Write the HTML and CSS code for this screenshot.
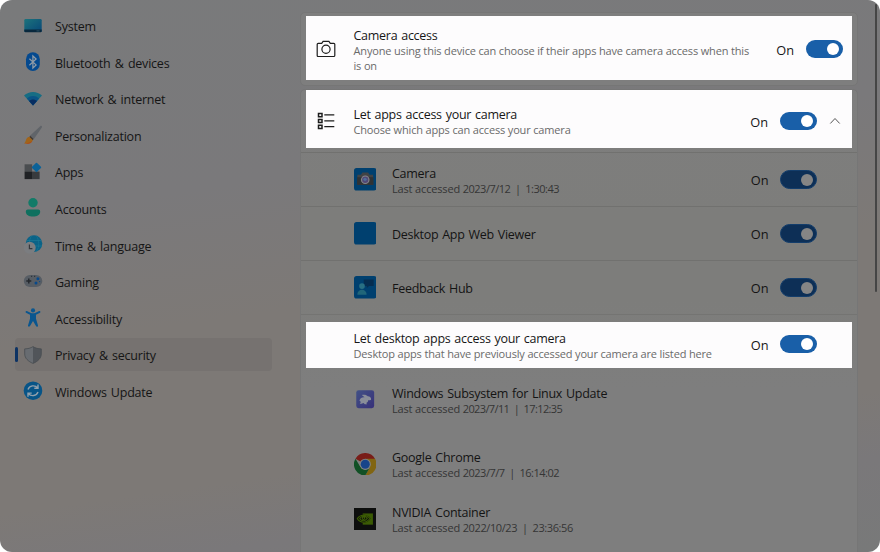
FILE: index.html
```html
<!DOCTYPE html>
<html lang="en">
<head>
<meta charset="utf-8">
<title>Privacy &amp; security</title>
<link rel="stylesheet" href="styles.css">
</head>
<body>
<div class="window">
  <nav class="sidebar">
    <a class="nav-item"><svg class="nav-icon" viewBox="0 0 20 20"><defs><linearGradient id="scr" x2="1" y2="1"><stop stop-color="#1c737c"/><stop offset="1" stop-color="#074778"/></linearGradient></defs><rect x="1.3" y="3.1" width="17.4" height="13" rx="1.2" fill="url(#scr)"/><path d="M1.3 13.500h17.4v1.600a1.200 1.200 0 0 1-1.200 1.200h-15a1.200 1.200 0 0 1-1.200-1.200z" fill="#08283d"/><path d="M13.500 14.900h3" stroke="#3a6072" stroke-width=".7"/></svg><span>System</span></a>
    <a class="nav-item"><svg class="nav-icon" viewBox="0 0 20 20"><rect x="3" y="0.3" width="13.800" height="18.800" rx="6.900" fill="#04498f"/><path d="M6.400 6.700l6.700 6.200L9.900 16V4l3.200 3-6.700 6.200" fill="none" stroke="#8e9aa6" stroke-width="1.250"/></svg><span>Bluetooth &amp; devices</span></a>
    <a class="nav-item"><svg class="nav-icon" viewBox="0 0 20 20"><g transform="translate(0 -1)"><path d="M1 7.500C6 2.700 14 2.700 19 7.500l-9 9.900z" fill="#176d84"/><path d="M3.900 10.500c3.500-3.300 8.700-3.300 12.200 0L10 17.400z" fill="#0b5486"/><path d="M6 13c2.400-2 5.600-2 8 0l-4 4.400z" fill="#072d61"/></g></svg><span>Network &amp; internet</span></a>
    <a class="nav-item"><svg class="nav-icon" viewBox="0 0 20 20"><path d="M7 10.800L17.200 1.200c1.200-.9 2.300.2 1.500 1.500L10.900 14z" fill="#606469"/><path d="M7.200 10.700l3.500 3.300-1.300 1.200-3.200-3z" fill="#403a34"/><path d="M6.200 11.800l3.600 3.400C9 18.600 4.500 19.400 1 18.300 3.600 17 2.200 12.700 6.200 11.800z" fill="#a0641a"/><path d="M1 18.300C4 18.300 7.500 17.200 9.300 15.900 7.700 19.200 4 19.200 1 18.300z" fill="#b0491a"/></svg><span>Personalization</span></a>
    <a class="nav-item"><svg class="nav-icon" viewBox="0 0 20 20"><rect x="1.600" y="2.300" width="7.500" height="7.400" fill="#4a4d50"/><rect x="1.600" y="9.600" width="7.500" height="7.500" fill="#202225"/><rect x="9" y="9.600" width="7.600" height="7.500" fill="#383b3e"/><rect x="10" y="1.800" width="7.100" height="7.100" rx=".8" fill="#0b6298" transform="rotate(45 13.500 5.300)"/></svg><span>Apps</span></a>
    <a class="nav-item"><svg class="nav-icon" viewBox="0 0 20 20"><circle cx="10" cy="4.700" r="4.700" fill="#127b68"/><path d="M4.800 11.400h10.400a2 2 0 0 1 2 2c0 3.400-3.200 5.200-7.200 5.200s-7.200-1.800-7.200-5.200a2 2 0 0 1 2-2z" fill="#0f705f"/></svg><span>Accounts</span></a>
    <a class="nav-item"><svg class="nav-icon" viewBox="0 0 20 20"><circle cx="11" cy="8.600" r="8.300" fill="#0b6387"/><path d="M4 5.500h14M3 11h16M8.500.9c-3 5-3 11 0 15.500M13.500.9c3 5 3 11 0 15.500" fill="none" stroke="#1b7895" stroke-width=".7"/><circle cx="6.700" cy="12.700" r="6" fill="#7b7d80"/><path d="M6.400 9.600v4h3" fill="none" stroke="#34383d" stroke-width="1.200"/></svg><span>Time &amp; language</span></a>
    <a class="nav-item"><svg class="nav-icon" viewBox="0 0 20 20"><rect x=".8" y="2.900" width="18.500" height="12.200" rx="6.100" fill="#575d64"/><path d="M3.300 9h5M5.800 6.500v5" stroke="#25292e" stroke-width="1.500"/><circle cx="14.900" cy="6.800" r="1.500" fill="#08498b"/><circle cx="13" cy="11" r="1.500" fill="#08498b"/><circle cx="16.600" cy="9.600" r=".7" fill="#08498b"/><path d="M8 4.300h1.200M11 4.300h1.200" stroke="#262c32"/></svg><span>Gaming</span></a>
    <a class="nav-item"><svg class="nav-icon" viewBox="0 0 20 20"><circle cx="10" cy="2.400" r="2.100" fill="#0a568f"/><path d="M3.800 3.100L8 4.900q2 .7 4 0l4.200-1.800c1.200-.3 1.700 1.200.8 1.700l-4 2v4l2 6.600c.2 1.300-1.500 1.700-2 .6L10 13.100l-3 4.900c-.6 1.100-2.300.6-2-.6l2-6.600v-4l-4-2c-.9-.6-.4-1.900.8-1.700z" fill="#0a568f"/></svg><span>Accessibility</span></a>
    <a class="nav-item selected"><svg class="nav-icon" viewBox="0 0 20 20"><path d="M10 1.600c2.500 1.600 5 2.200 8.300 2.300v5c0 4.300-3.500 7.500-8.300 9.500z" fill="#51555a"/><path d="M10 1.600C7.500 3.200 5 3.800 1.700 3.900v5c0 4.300 3.500 7.500 8.300 9.500z" fill="#686c71"/><path d="M10 1.600c2.500 1.600 5 2.200 8.300 2.300v5c0 4.300-3.500 7.500-8.300 9.500-4.800-2-8.300-5.200-8.300-9.500v-5C5 3.800 7.500 3.200 10 1.600z" fill="none" stroke="#484c51" stroke-width=".8"/></svg><span>Privacy &amp; security</span></a>
    <a class="nav-item"><svg class="nav-icon" viewBox="0 0 20 20"><circle cx="10" cy="9.700" r="9.300" fill="#075487"/><path d="M5 8.400c1.400-4 6.900-4.800 9.700-1.500M15 3.600v3.700h-3.700M15 11.100c-1.400 4-6.900 4.700-9.700 1.400M5 15.800v-3.700h3.700" fill="none" stroke="#91a0ac" stroke-width="1.400"/></svg><span>Windows Update</span></a>
  </nav>
  <main class="content">
    <section class="card access">
      <div class="spot spot-access">
        <svg class="lead" viewBox="0 0 20 20"><path d="M2.200 4.300h3.500l1.400-2h5.800l1.400 2h3.500c.6 0 1 .4 1 1v11.200c0 .6-.4 1-1 1H2.200c-.6 0-1-.4-1-1V5.300c0-.6.400-1 1-1z"/><circle cx="10" cy="10.300" r="4.100"/></svg>
        <div class="copy"><h2>Camera access</h2><p>Anyone using this device can choose if their apps have camera access when this<br>is on</p></div>
        <span class="state">On</span><i class="toggle"></i>
      </div>
    </section>
    <section class="card apps">
      <div class="spot spot-apps">
        <svg class="lead" viewBox="0 0 20 20"><path d="M2.500 2.600h3.500v3.200H2.500zM2.500 8.400h3.500v3.200H2.500zM2.500 14.200h3.500v3.200H2.500z" stroke-width="1.500"/><path d="M8.300 3.800h10M8.300 9.900h10M8.300 15.600h10"/></svg>
        <div class="copy"><h2>Let apps access your camera</h2><p>Choose which apps can access your camera</p></div>
        <span class="state">On</span><i class="toggle"></i>
        <svg class="chevron" viewBox="0 0 12 12"><path d="M1.300 8.500L6 3.500l4.700 5"/></svg>
      </div>
      <div class="row camera">
        <svg class="app-icon" viewBox="0 0 22 22"><rect width="22" height="22" rx="2.500" fill="#00406f"/><path d="M3.300 6.500h3.500l1.400-2h5.600l1.400 2h3.500v10H3.300z" fill="#414345"/><path d="M3 9h16v7.500H3z" fill="#303335"/><circle cx="11" cy="11.500" r="4.200" fill="#85878a"/><circle cx="11" cy="11.500" r="3.100" fill="#514877"/><circle cx="10.800" cy="11.100" r="1.600" fill="#4f6f97"/></svg>
        <div class="copy"><h2>Camera</h2><p>Last accessed <span class="when">2023/7/12 &nbsp;|&nbsp; 1:30:43</span></p></div>
        <span class="state">On</span><i class="toggle"></i>
      </div>
      <div class="row">
        <svg class="app-icon" viewBox="0 0 22 22"><rect width="22" height="22" rx="2.500" fill="#00406f"/></svg>
        <div class="copy"><h2>Desktop App Web Viewer</h2></div>
        <span class="state">On</span><i class="toggle"></i>
      </div>
      <div class="row">
        <svg class="app-icon" viewBox="0 0 22 22"><rect width="22" height="22" rx="2.500" fill="#00406f"/><path d="M9.500 3.300h9.700v6.500h-4.500l-2.200 2v-2h-3z" fill="#062d50"/><circle cx="7.800" cy="9.800" r="2.800" fill="#286f83"/><path d="M3.300 18.400c0-6.500 9-6.500 9 0z" fill="#216679"/></svg>
        <div class="copy"><h2>Feedback Hub</h2></div>
        <span class="state">On</span><i class="toggle"></i>
      </div>
      <div class="group">
        <div class="spot spot-desktop">
          <div class="copy"><h2>Let desktop apps access your camera</h2><p>Desktop apps that have previously accessed your camera are listed here</p></div>
          <span class="state">On</span><i class="toggle"></i>
        </div>
        <div class="desktop-app wsl">
          <svg class="app-icon" viewBox="0 0 22 22"><defs><linearGradient id="wsl" x2="1" y2="1"><stop stop-color="#425186"/><stop offset="1" stop-color="#373079"/></linearGradient></defs><rect x="2.200" y="1.200" width="17.500" height="17.500" rx="2.300" fill="url(#wsl)"/><path d="M5.300 11.300c.5-2.500 2.800-3.600 5-3.300L7.600 5.900c2.200-.7 4.800-.4 5.900 1.300 2.200 0 3.400 1.600 3.200 3.200-1 .8-2 .6-2.900.6.200 1.500-.9 2.300-1.800 2.700l.8 1.100h-2.200l-1.400-1.200-1.700.9H5.600l1.100-1.900z" fill="#898d99"/></svg>
          <div class="copy"><h2>Windows Subsystem for Linux Update</h2><p>Last accessed <span class="when">2023/7/11 &nbsp;|&nbsp; 17:12:35</span></p></div>
        </div>
        <div class="desktop-app chrome">
          <svg class="app-icon" viewBox="0 0 22 22"><path d="M11 11L1.470 5.500A11 11 0 0 1 20.530 5.500z" fill="#791d18"/><path d="M11 5.500h9.530A11 11 0 0 1 11 22l4.760-8.250z" fill="#816512"/><path d="M1.470 5.500l4.770 8.250L11 16.500l4.760-2.750L11 22A11 11 0 0 1 1.470 5.500z" fill="#115025"/><circle cx="11" cy="11" r="5.500" fill="#808080"/><circle cx="11" cy="11" r="4.400" fill="#18448a"/></svg>
          <div class="copy"><h2>Google Chrome</h2><p>Last accessed <span class="when">2023/7/7 &nbsp;|&nbsp; 16:14:02</span></p></div>
        </div>
        <div class="desktop-app nvidia">
          <svg class="app-icon" viewBox="0 0 22 22"><rect width="22" height="22" fill="#0d0e0d"/><path d="M8.500 5.300h10v11h-10z" fill="#3b5b04"/><path d="M2.700 10.500C5 6 12 4.700 16.200 10.300 12.500 16 5.500 16 2.700 10.500z" fill="#0d0e0d"/><path d="M3.200 10.400C6 6.300 11.700 5.700 15.500 10.200 12 15 6.300 15 3.200 10.400zM5.500 10.400c2-3 5.400-3 7.600-.3-2.100 3-5.400 3.200-7.600.3zM8.700 8.700c2-.2 2.400 1.900.7 2.600-1.400-.2-1.700-1.400-.7-2.600z" fill="none" stroke="#3b5b04" stroke-width="1"/></svg>
          <div class="copy"><h2>NVIDIA Container</h2><p>Last accessed <span class="when">2022/10/23 &nbsp;|&nbsp; 23:36:56</span></p></div>
        </div>
      </div>
    </section>
  </main>
  <div class="scrollbar"></div>
</div>
</body>
</html>
```
FILE: styles.css
```css
* { box-sizing: border-box; }
body { margin: 0; background: #fff; font-family: "Open Sans", "Noto Sans", sans-serif; }
h2, p { margin: 0; font-weight: 400; white-space: nowrap; }
.window {
  display: flex; width: 880px; height: 552px; overflow: hidden; border-radius: 12px;
  background: linear-gradient(172deg, #797a7b 0%, #7a797b 32%, #7d7976 52%, #7d7976 76%, #7a787a 86%, #787979 100%);
}
.sidebar { display: flex; flex-direction: column; gap: 3.6px; width: 300px; flex: none; padding: 9px 28px 0 14.5px; }
.nav-item {
  display: flex; align-items: center; height: 33px; flex: none; padding-left: 8.5px;
  font-size: 12.5px; color: #151515; letter-spacing: -0.22px; word-spacing: 1.2px; border-radius: 4px;
}
.nav-item span { padding: 2px 0 0 12px; white-space: nowrap; }
.nav-icon { width: 20px; height: 20px; flex: none; }
.selected { background: #767270; padding-left: 0; }
.selected::before { content: ""; width: 3px; height: 15px; margin-right: 5.5px; border-radius: 1.5px; background: #0d3364; }
.content { width: 558px; flex: none; padding-top: 12px; }
.card { border: 1px solid #767676; border-radius: 5px; background: #7e7e7e; }
.access { height: 74px; padding: 3px 5px; margin-bottom: 3px; }
.apps { height: 500px; background: linear-gradient(#7e7e7e, #7d7d7b 25%, #7d7d7b 42%, #7e7e7e 60%); }
.spot { display: flex; align-items: center; background: #fdfcfd; color: #171717; margin: 0 5px; }
.spot-access { height: 64px; margin: 0; padding: 2px 9.5px 0 10px; }
.spot-apps { height: 58px; padding: 4px 11px 0 10px; margin-bottom: 4px; }
.spot-desktop { height: 46px; padding: 0 35px 2px 47.5px; }
.lead { width: 20px; height: 20px; flex: none; fill: none; stroke: #1d1d1d; stroke-width: 1.2; }
.spot .lead + .copy { margin-left: 17.5px; }
.copy { flex: 1; min-width: 0; }
.spot-access .copy, .spot-desktop .copy { padding-top: 2px; }
h2 { font-size: 12.5px; line-height: 14px; padding-top: 2px; letter-spacing: -0.27px; word-spacing: 0.9px; }
p { font-size: 11px; line-height: 15px; color: #6a6a6a; letter-spacing: -0.16px; }
.when { letter-spacing: -0.5px; }
.wsl .when { letter-spacing: -0.62px; }
.nvidia .when { letter-spacing: -0.4px; }
.state { font-size: 12.8px; line-height: 16px; padding-top: 1px; margin-right: 11.5px; }
.toggle { display: flex; justify-content: flex-end; align-items: center; width: 37px; height: 18.5px; border-radius: 10px; background: #195fa8; padding-right: 4px; flex: none; }
.spot-access .state, .spot-desktop .state { padding-top: 2px; }
.toggle::after { content: ""; width: 12px; height: 12px; border-radius: 50%; background: #fff; }
.chevron { width: 12px; height: 12px; margin-left: 12.5px; fill: none; stroke: #555; }
.row { display: flex; align-items: center; height: 54px; border-top: 1px solid #71716f; padding: 0 40px 0 52.5px; color: #141414; }
.camera .copy { padding-top: 1px; }
.group { border-top: 1px solid #747472; padding-top: 7px; }
.app-icon { width: 22.5px; height: 22.5px; flex: none; margin-right: 16px; }
.row p, .desktop-app p { color: #353535; }
.row .toggle { background: #0d2f56; border: 1px solid #133d6b; padding-right: 3px; }
.row .toggle::after { background: #858585; }
.desktop-app { display: flex; align-items: center; height: 32px; padding-left: 52.5px; color: #141414; }
.wsl { margin-top: 16px; }
.chrome { margin-top: 32px; }
.nvidia { margin-top: 23px; }
.scrollbar { width: 2px; height: 288px; margin: 4px 0 0 17px; border-radius: 1px; background: #454545; }
```
